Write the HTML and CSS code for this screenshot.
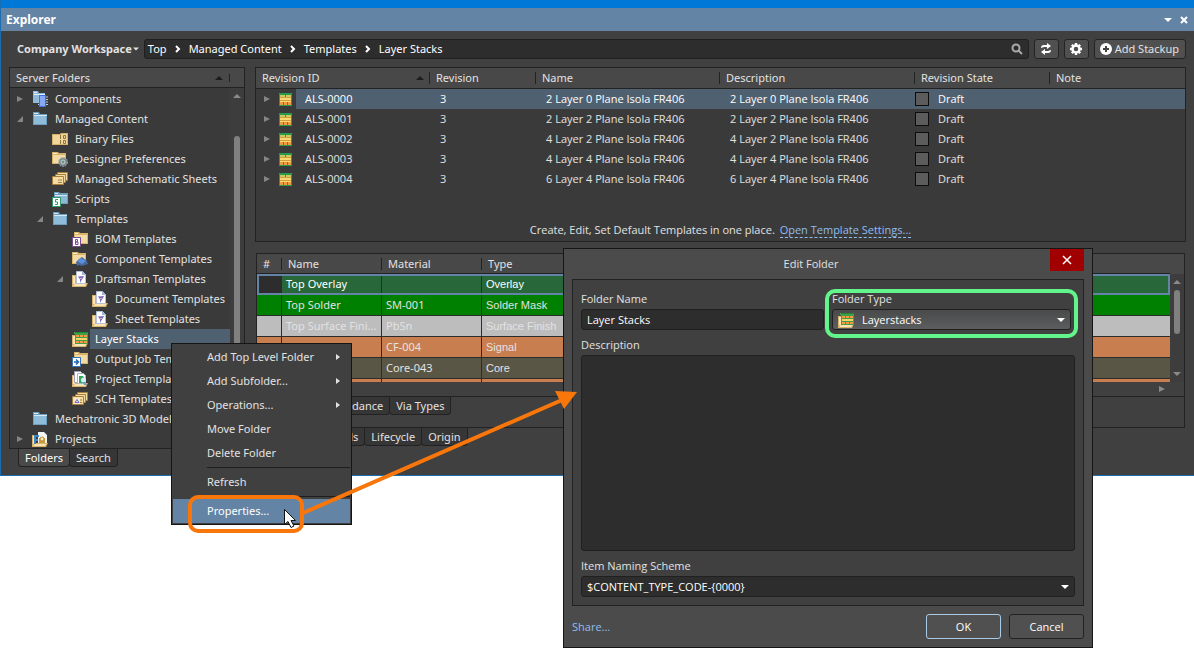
FILE: index.html
```html
<!DOCTYPE html>
<html lang="en">
<head>
    <meta charset="UTF-8">
    <meta name="viewport" content="width=device-width, initial-scale=1.0">
    <title>Explorer</title>
    <link rel="stylesheet" href="styles.css">
</head>
<body>
    <!-- Shared icons -->
    <svg class="sprite" aria-hidden="true">
        <symbol id="i-right" viewBox="0 0 8 8"><path d="M1 1l6 3-6 3z" fill="currentColor"/></symbol>
        <symbol id="i-sub" viewBox="0 0 8 8"><path d="M3 1l4 3-4 3z" fill="currentColor"/></symbol>
        <symbol id="i-open" viewBox="0 0 8 8"><path d="M7 1v6H1z" fill="currentColor"/></symbol>
        <symbol id="i-up" viewBox="0 0 8 8"><path d="M0 6l4-4 4 4z" fill="currentColor"/></symbol>
        <symbol id="i-down" viewBox="0 0 8 8"><path d="M0 2h8l-4 4z" fill="currentColor"/></symbol>
        <symbol id="i-chevron" viewBox="0 0 8 8"><path d="M2 1l3 3-3 3" fill="none" stroke="currentColor" stroke-width="2"/></symbol>
        <symbol id="i-blue" viewBox="0 0 16 16">
            <path d="M1 1h6l1 2h7v11H1z" fill="#6f9fbe"/>
            <path d="M2 2h4v1H2zM2 4h13v1H2z" fill="#d6e8f2"/>
            <path d="M2 5h12v8H2z" fill="#8fbcd8"/>
        </symbol>
        <symbol id="i-yellow" viewBox="0 0 16 16">
            <path d="M0 3h8l1-1h7v12H0z" fill="#d9b26a"/>
            <path d="M1 4h8l1-1h5v10H1z" fill="#f0d59c"/>
        </symbol>
        <symbol id="i-small" viewBox="0 0 16 16">
            <path d="M0 1h6l1 1h7v11H0z" fill="#d9b26a"/>
            <path d="M1 2h4v1H1z" fill="#fff3d4"/>
            <path d="M1 4h12v8H1z" fill="#f3dba6"/>
        </symbol>
        <symbol id="i-tray" viewBox="0 0 16 16">
            <path d="M0 4h4v8h12l-2 4H0z" fill="#d9b26a"/>
            <path d="M1 5h2v8H1zM3 13h11l-1 2H1z" fill="#f8e4b6"/>
        </symbol>
        <symbol id="i-components" viewBox="0 0 16 16">
            <path d="M1 0h5l1 2h6v10H1z" fill="#8cb9d8"/>
            <path d="M2 1h3v1H2zM2 3h11v1H2z" fill="#e2f0f8"/>
            <path d="M6 6h10M6 8.500h10M6 11h10M6 13.500h10" stroke="#b8cde8"/>
            <path d="M7 4h7v12H7z" fill="#3f6fdc"/>
            <path d="M8 5h5v10H8z" fill="#86a9f5"/>
        </symbol>
        <symbol id="i-binary" viewBox="0 0 16 16">
            <use href="#i-yellow"/>
            <path d="M8.500 4v4M11.500 4.500h2v3h-2zM8.500 9v4M11.500 9.500h2v3h-2z" fill="none" stroke="#8f7338"/>
        </symbol>
        <symbol id="i-prefs" viewBox="0 0 16 16">
            <use href="#i-small"/>
            <circle cx="11" cy="11" r="4" fill="#7d8a90"/>
            <circle cx="11" cy="11" r="4.500" fill="none" stroke="#9aa8b0" stroke-dasharray="2 1"/>
            <circle cx="11" cy="11" r="2" fill="#6f8f7c" stroke="#c4d0d0"/>
        </symbol>
        <symbol id="i-sheets" viewBox="0 0 16 16">
            <g fill="#f3dba6" stroke="#a97e3a">
                <path d="M5.500 1.500h10v8h-10z"/>
                <path d="M3.500 3.500h10v8h-10z"/>
                <path d="M.500 5.500h11v8H.500z"/>
            </g>
            <path d="M6 9h4M6 11.500h4" stroke="#a97e3a"/>
        </symbol>
        <symbol id="i-scripts" viewBox="0 0 16 16">
            <path d="M2 1h5l1 1h8v11H2z" fill="#6f9fbe"/>
            <path d="M3 2h3v1H3zM3 4h12v1H3z" fill="#d6e8f2"/>
            <path d="M3 5h12v7H3z" fill="#8cb9d8"/>
            <path d="M.500 6.500h8v9h-8z" fill="#fff" stroke="#2f9a68"/>
            <path d="M6 8.500H3.500V11h2v2.500H3" fill="none" stroke="#2f9a68"/>
        </symbol>
        <symbol id="i-bom" viewBox="0 0 16 16">
            <path d="M2 1h5l1 1h8v11H2z" fill="#d9b26a"/>
            <path d="M3 2h3v1H3z" fill="#fff3d4"/>
            <path d="M3 4h12v8H3z" fill="#f3dba6"/>
            <path d="M.500 6.500h8v9h-8z" fill="#fff" stroke="#7c4a94"/>
            <path d="M3.500 8.500H5.500v2.500h-2zM3.500 11h2.500v2.500h-2.500z" fill="none" stroke="#7c4a94"/>
        </symbol>
        <symbol id="i-comptpl" viewBox="0 0 16 16">
            <use href="#i-small"/>
            <path d="M4 11l3-3 3-2 5 4 1 3-3 1-3 1-3-1-2 1z" fill="#49689a"/>
            <path d="M5 10l4-3 5 3-4 3z" fill="#5b8fe0"/>
        </symbol>
        <symbol id="i-draft" viewBox="0 0 16 16">
            <use href="#i-tray"/>
            <path d="M4.500.500h6l3 3v9h-9z" fill="#fff" stroke="#b6c0d8"/>
            <path d="M6 5.500l6-.5-1 2-2 3-1 2V8.500z" fill="#7a6cc0"/>
            <path d="M8 7.500h2" stroke="#e7a6b0"/>
            <path d="M10 0l4 4h-4z" fill="#9db4d8"/>
        </symbol>
        <symbol id="i-stack" viewBox="0 0 16 16">
            <use href="#i-tray"/>
            <path d="M2 1h14v12H3V3H2z" fill="#3fa04a"/>
            <path d="M4 4h3v2H4zM8 4h3v2H8zM12 4h3v2h-3zM4 10h3v2H4zM8 10h3v2H8zM12 10h3v2h-3z" fill="#f29a44"/>
            <path d="M4 7h11v2H4z" fill="#f6d46c"/>
            <path d="M3 1.500h13" stroke="#208a38"/>
        </symbol>
        <symbol id="i-output" viewBox="0 0 16 16">
            <path d="M2 1h5l1 1h8v11H2z" fill="#d9b26a"/>
            <path d="M3 2h3v1H3z" fill="#fff3d4"/>
            <path d="M3 4h12v8H3z" fill="#f3dba6"/>
            <path d="M.500 6.500h8v9h-8z" fill="#fff" stroke="#3a72b8"/>
            <path d="M2 11h4M4 8.500L6.500 11 4 13.500" fill="none" stroke="#2363b0" stroke-width="1.500"/>
        </symbol>
        <symbol id="i-project" viewBox="0 0 16 16">
            <use href="#i-tray"/>
            <path d="M2.500.500h6l2 2v9h-8z" fill="#fff" stroke="#a5a0c8"/>
            <path d="M5.500 2.500h6l2 2v8h-8z" fill="#fff" stroke="#a5b8c8"/>
            <path d="M7 5h4l2 3v4H7z" fill="#35a75d"/>
            <circle cx="11.500" cy="9" r="2.500" fill="#d8ecf8"/>
            <path d="M11 11l2 0 2 3h-3z" fill="#5f9fc8"/>
        </symbol>
        <symbol id="i-sch" viewBox="0 0 16 16">
            <use href="#i-sheets"/>
            <path d="M2 7h6v6H2z" fill="#f8ead0"/>
            <path d="M3 11.500l2-3 2 3z" fill="none" stroke="#6a6cc0"/>
        </symbol>
        <symbol id="i-projects" viewBox="0 0 16 16">
            <use href="#i-tray"/>
            <path d="M6 1h6l3 3v8H6z" fill="#f4f4f4"/>
            <path d="M3 13V5h4M3 9h3" fill="none" stroke="#3f84c8" stroke-width="2"/>
            <path d="M7 7h6v5H7z" fill="#c99a3e"/>
            <circle cx="10" cy="8" r="2" fill="#fff0c0" stroke="#b98c34"/>
        </symbol>
        <symbol id="i-board" viewBox="0 0 13 13">
            <path d="M0 0h13v13H0z" fill="#279a4b"/>
            <path d="M1 2h5v2H1zM7 2h5v2H7z" fill="#c8cc60"/>
            <path d="M1 4h11v5H1z" fill="#f6dc6c"/>
            <path d="M1 4.500h11M1 7.500h11" stroke="#d89a48"/>
            <path d="M1 9h3v3H1zM5 9h3v3H5zM9 9h3v3H9z" fill="#f09a44"/>
        </symbol>
    </svg>

    <main class="explorer">
        <header class="titlebar">
            <h1>Explorer</h1>
            <button class="title-btn" aria-label="Panel menu"><svg class="tiny"><use href="#i-down"/></svg></button>
            <button class="title-btn" aria-label="Close panel"><svg class="tiny" viewBox="0 0 8 8"><path d="M1 1l6 6M7 1L1 7" stroke="currentColor" stroke-width="2"/></svg></button>
        </header>

        <div class="toolbar">
            <button class="workspace">Company Workspace <svg class="caret"><use href="#i-down"/></svg></button>
            <nav class="path" aria-label="Path">
                <a href="#">Top</a><svg class="tiny"><use href="#i-chevron"/></svg>
                <a href="#">Managed Content</a><svg class="tiny"><use href="#i-chevron"/></svg>
                <a href="#">Templates</a><svg class="tiny"><use href="#i-chevron"/></svg>
                <a href="#">Layer Stacks</a>
                <svg class="search" viewBox="0 0 12 12"><circle cx="5" cy="5" r="3.500" fill="none" stroke="#aaa" stroke-width="2"/><path d="M7.500 7.500L11 11" stroke="#aaa" stroke-width="2"/></svg>
            </nav>
            <button class="tool" aria-label="Refresh">
                <svg class="tool-icon" viewBox="0 0 12 12"><path d="M1 5c0-2 1-3 3-3h3V0l4 3-4 3V4H4C3 4 2.500 5 1 5zM11 7c0 2-1 3-3 3H5v2L1 9l4-3v2h3c1 0 1.500-1 3-1z" fill="#fff"/></svg>
            </button>
            <button class="tool" aria-label="Settings">
                <svg class="tool-icon" viewBox="0 0 12 12"><circle cx="6" cy="6" r="3.500" fill="none" stroke="#fff" stroke-width="2.500"/><path d="M6 0v2M6 10v2M0 6h2M10 6h2M1.800 1.800l1.400 1.400M8.800 8.800l1.400 1.400M10.200 1.800L8.800 3.200M3.200 8.800l-1.400 1.400" stroke="#fff" stroke-width="2.400"/></svg>
            </button>
            <button class="tool">
                <svg class="tool-icon" viewBox="0 0 12 12"><circle cx="6" cy="6" r="6" fill="#fff"/><path d="M6 3v6M3 6h6" stroke="#444" stroke-width="2"/></svg>
                Add Stackup
            </button>
        </div>

        <div class="columns">
            <aside class="sidebar">
                <div class="panel">
                    <div class="panel-head">
                        <h2>Server Folders</h2>
                        <svg class="sort"><use href="#i-up"/></svg>
                    </div>
                    <div class="scroller">
                        <ul class="tree">
                            <li><div class="node"><svg class="twist"><use href="#i-right"/></svg><svg class="icon"><use href="#i-components"/></svg><span>Components</span></div></li>
                            <li><div class="node"><svg class="twist"><use href="#i-open"/></svg><svg class="icon"><use href="#i-blue"/></svg><span>Managed Content</span></div>
                                <ul>
                                    <li><div class="node"><i class="twist"></i><svg class="icon"><use href="#i-binary"/></svg><span>Binary Files</span></div></li>
                                    <li><div class="node"><i class="twist"></i><svg class="icon"><use href="#i-prefs"/></svg><span>Designer Preferences</span></div></li>
                                    <li><div class="node"><i class="twist"></i><svg class="icon"><use href="#i-sheets"/></svg><span>Managed Schematic Sheets</span></div></li>
                                    <li><div class="node"><i class="twist"></i><svg class="icon"><use href="#i-scripts"/></svg><span>Scripts</span></div></li>
                                    <li><div class="node"><svg class="twist"><use href="#i-open"/></svg><svg class="icon"><use href="#i-blue"/></svg><span>Templates</span></div>
                                        <ul>
                                            <li><div class="node"><i class="twist"></i><svg class="icon"><use href="#i-bom"/></svg><span>BOM Templates</span></div></li>
                                            <li><div class="node"><i class="twist"></i><svg class="icon"><use href="#i-comptpl"/></svg><span>Component Templates</span></div></li>
                                            <li><div class="node"><svg class="twist"><use href="#i-open"/></svg><svg class="icon"><use href="#i-draft"/></svg><span>Draftsman Templates</span></div>
                                                <ul>
                                                    <li><div class="node"><i class="twist"></i><svg class="icon"><use href="#i-draft"/></svg><span>Document Templates</span></div></li>
                                                    <li><div class="node"><i class="twist"></i><svg class="icon"><use href="#i-draft"/></svg><span>Sheet Templates</span></div></li>
                                                </ul>
                                            </li>
                                            <li><div class="node selected"><i class="twist"></i><svg class="icon"><use href="#i-stack"/></svg><span>Layer Stacks</span></div></li>
                                            <li><div class="node"><i class="twist"></i><svg class="icon"><use href="#i-output"/></svg><span>Output Job Templates</span></div></li>
                                            <li><div class="node"><i class="twist"></i><svg class="icon"><use href="#i-project"/></svg><span>Project Templates</span></div></li>
                                            <li><div class="node"><i class="twist"></i><svg class="icon"><use href="#i-sch"/></svg><span>SCH Templates</span></div></li>
                                        </ul>
                                    </li>
                                </ul>
                            </li>
                            <li><div class="node"><i class="twist"></i><svg class="icon"><use href="#i-blue"/></svg><span>Mechatronic 3D Models</span></div></li>
                            <li><div class="node"><svg class="twist"><use href="#i-right"/></svg><svg class="icon"><use href="#i-projects"/></svg><span>Projects</span></div></li>
                        </ul>
                        <div class="scrollbar tall"><svg class="tiny"><use href="#i-up"/></svg><div class="thumb"></div></div>
                    </div>
                </div>
                <div class="tabs side-tabs">
                    <button class="tab active">Folders</button>
                    <button class="tab">Search</button>
                </div>
            </aside>

            <section class="content">
                <div class="panel revisions">
                    <table class="grid">
                        <thead>
                            <tr><th class="c-id"><div class="sorted">Revision ID <svg class="sort"><use href="#i-up"/></svg></div></th><th class="c-rev">Revision</th><th class="c-name">Name</th><th class="c-desc">Description</th><th class="c-state">Revision State</th><th>Note</th></tr>
                        </thead>
                        <tbody>
                            <tr class="selected"><td class="id"><div class="node"><svg class="twist"><use href="#i-right"/></svg><svg class="board"><use href="#i-board"/></svg><span>ALS-0000</span></div></td><td>3</td><td>2 Layer 0 Plane Isola FR406</td><td>2 Layer 0 Plane Isola FR406</td><td class="state"><label><input type="checkbox">Draft</label></td><td></td></tr>
                            <tr><td class="id"><div class="node"><svg class="twist"><use href="#i-right"/></svg><svg class="board"><use href="#i-board"/></svg><span>ALS-0001</span></div></td><td>3</td><td>2 Layer 2 Plane Isola FR406</td><td>2 Layer 2 Plane Isola FR406</td><td class="state"><label><input type="checkbox">Draft</label></td><td></td></tr>
                            <tr><td class="id"><div class="node"><svg class="twist"><use href="#i-right"/></svg><svg class="board"><use href="#i-board"/></svg><span>ALS-0002</span></div></td><td>3</td><td>4 Layer 2 Plane Isola FR406</td><td>4 Layer 2 Plane Isola FR406</td><td class="state"><label><input type="checkbox">Draft</label></td><td></td></tr>
                            <tr><td class="id"><div class="node"><svg class="twist"><use href="#i-right"/></svg><svg class="board"><use href="#i-board"/></svg><span>ALS-0003</span></div></td><td>3</td><td>4 Layer 4 Plane Isola FR406</td><td>4 Layer 4 Plane Isola FR406</td><td class="state"><label><input type="checkbox">Draft</label></td><td></td></tr>
                            <tr><td class="id"><div class="node"><svg class="twist"><use href="#i-right"/></svg><svg class="board"><use href="#i-board"/></svg><span>ALS-0004</span></div></td><td>3</td><td>6 Layer 4 Plane Isola FR406</td><td>6 Layer 4 Plane Isola FR406</td><td class="state"><label><input type="checkbox">Draft</label></td><td></td></tr>
                        </tbody>
                    </table>
                    <p class="hint">Create, Edit, Set Default Templates in one place. <a href="#">Open Template Settings...</a></p>
                </div>

                <div class="panel preview">
                    <div class="layers-area">
                        <div class="layers-clip">
                            <table class="layers">
                                <thead>
                                    <tr><th class="c-num">#</th><th class="c-layer">Name</th><th class="c-layer">Material</th><th>Type</th></tr>
                                </thead>
                                <tbody>
                                    <tr class="overlay"><td class="num"></td><td>Top Overlay</td><td></td><td class="type">Overlay</td></tr>
                                    <tr class="solder"><td></td><td>Top Solder</td><td>SM-001</td><td class="type">Solder Mask</td></tr>
                                    <tr class="finish"><td></td><td>Top Surface Fini...</td><td>PbSn</td><td class="type">Surface Finish</td></tr>
                                    <tr class="signal"><td></td><td></td><td>CF-004</td><td class="type">Signal</td></tr>
                                    <tr class="core"><td></td><td></td><td>Core-043</td><td class="type">Core</td></tr>
                                    <tr class="signal"><td></td><td></td><td></td><td></td></tr>
                                </tbody>
                            </table>
                        </div>
                        <div class="scrollbar"><svg class="tiny"><use href="#i-up"/></svg><div class="thumb"></div><svg class="tiny"><use href="#i-down"/></svg></div>
                    </div>
                    <div class="hscroll"><svg class="tiny"><use href="#i-right"/></svg></div>
                    <div class="tabs view-tabs">
                        <button class="tab">Impedance</button>
                        <button class="tab">Via Types</button>
                    </div>
                </div>
                <div class="tabs item-tabs">
                    <button class="tab">Details</button>
                    <button class="tab">Lifecycle</button>
                    <button class="tab">Origin</button>
                </div>
            </section>
        </div>
    </main>

    <div class="menu" role="menu">
        <button role="menuitem">Add Top Level Folder <svg class="tiny"><use href="#i-sub"/></svg></button>
        <button role="menuitem">Add Subfolder... <svg class="tiny"><use href="#i-sub"/></svg></button>
        <button role="menuitem">Operations... <svg class="tiny"><use href="#i-sub"/></svg></button>
        <button role="menuitem">Move Folder</button>
        <button role="menuitem">Delete Folder</button>
        <hr>
        <button role="menuitem">Refresh</button>
        <hr>
        <button role="menuitem" class="active">Properties...</button>
    </div>

    <form class="dialog" role="dialog" aria-labelledby="dialog-title">
        <header class="dialog-head">
            <h2 id="dialog-title">Edit Folder</h2>
            <button type="button" class="close" aria-label="Close"><svg viewBox="0 0 10 10"><path d="M1 1l8 8M9 1L1 9" stroke="#fff" stroke-width="1.500"/></svg></button>
        </header>
        <div class="fields">
            <div class="field-row">
                <div class="field name-field">
                    <label for="folder-name">Folder Name</label>
                    <input type="text" id="folder-name" value="Layer Stacks">
                </div>
                <div class="field type-field">
                    <label for="folder-type">Folder Type</label>
                    <div class="select raised">
                        <svg class="icon"><use href="#i-stack"/></svg>
                        <select id="folder-type"><option>Layerstacks</option></select>
                        <svg class="arrow"><use href="#i-down"/></svg>
                    </div>
                </div>
            </div>
            <div class="field">
                <label for="description">Description</label>
                <textarea id="description"></textarea>
            </div>
            <div class="field">
                <label for="naming">Item Naming Scheme</label>
                <div class="select">
                    <select id="naming"><option>$CONTENT_TYPE_CODE-{0000}</option></select>
                    <svg class="arrow"><use href="#i-down"/></svg>
                </div>
            </div>
        </div>
        <footer class="dialog-foot">
            <a href="#">Share...</a>
            <button type="button" class="btn primary">OK</button>
            <button type="button" class="btn">Cancel</button>
        </footer>
    </form>

    <!-- Callouts -->
    <svg class="callouts" viewBox="0 0 1194 648" aria-hidden="true">
        <rect x="190" y="497" width="112" height="34" rx="8" fill="none" stroke="#f9760b" stroke-width="4"/>
        <path d="M303 513L562 400" stroke="#f9760b" stroke-width="4"/>
        <path d="M577 392l-22-1 9 18z" fill="#f9760b"/>
        <rect x="827" y="291" width="249" height="45" rx="8" fill="none" stroke="#62f58b" stroke-width="4"/>
        <path d="M284.500 509.500v15l3.500-3 3 6 3-1.500-3-5.500h4.500z" fill="#fff" stroke="#111"/>
    </svg>
</body>
</html>
```

FILE: styles.css
```css
* {
    box-sizing: border-box;
}

body {
    margin: 0;
    position: relative;
    min-height: 100vh;
    background-color: #fff;
    color: #e2e2e2;
    font-family: "Noto Sans", sans-serif;
    font-size: 11px;
    line-height: 20px;
}

h1, h2, p, ul {
    margin: 0;
    padding: 0;
    font-size: 11px;
    font-weight: normal;
}

ul {
    list-style: none;
}

button, input, select, textarea {
    margin: 0;
    font: inherit;
    color: inherit;
}

button {
    padding: 0;
    border: none;
    background: none;
}

a {
    color: inherit;
    text-decoration: none;
}

svg {
    display: block;
    flex: none;
}

.sprite {
    position: absolute;
    width: 0;
    height: 0;
}

.tiny {
    width: 8px;
    height: 8px;
}

.icon {
    width: 16px;
    height: 16px;
}

/* Explorer window */
.explorer {
    background-color: #404040;
    border: solid #1b6db0;
    border-width: 0 0 1px 1px;
}

.titlebar {
    display: flex;
    align-items: center;
    gap: 8px;
    height: 31px;
    padding: 0 6px 0 5px;
    border-top: 8px solid #0078d7;
    background-color: #6484a5;
    color: #fff;
}

.titlebar h1 {
    flex: 1;
    font-size: 12px;
    font-weight: bold;
}

.toolbar {
    display: flex;
    align-items: center;
    gap: 5px;
    height: 36px;
    padding: 0 8px 0 16px;
}

.workspace {
    display: flex;
    align-items: center;
    gap: 1px;
    font-weight: bold;
}

.caret {
    width: 6px;
    height: 6px;
}

.path {
    flex: 1;
    display: flex;
    align-items: center;
    gap: 7px;
    height: 20px;
    padding: 0 5px 0 3px;
    background-color: #2d2d2d;
    border: 1px solid #202020;
    border-radius: 3px;
    color: #fff;
}

.search {
    width: 12px;
    height: 12px;
    margin-left: auto;
}

.tool {
    display: flex;
    align-items: center;
    gap: 3px;
    height: 20px;
    padding: 0 6px 0 5px;
    background-color: #505050;
    border: 1px solid #242424;
    border-radius: 3px;
    white-space: nowrap;
}

.tool-icon {
    width: 12px;
    height: 12px;
}

.columns {
    display: flex;
    gap: 10px;
    padding: 0 8px 8px;
}

.sidebar {
    flex: none;
    width: 236px;
}

.content {
    flex: 1;
    min-width: 0;
}

.panel {
    border: 1px solid #222;
    background-color: #3a3a3a;
}

.panel-head {
    display: flex;
    align-items: center;
    height: 20px;
    padding: 0 14px 0 6px;
    background-color: #484848;
    border-bottom: 1px solid #222;
}

.panel-head h2 {
    flex: 1;
}

.panel-head .sort {
    width: 8px;
    padding-right: 6px;
    border-right: 1px solid #222;
    box-sizing: content-box;
}

.sort {
    width: 8px;
    height: 8px;
    color: #1c1c1c;
}

/* Folder tree */
.scroller {
    display: flex;
}

.tree {
    flex: 1;
    min-width: 0;
    margin-bottom: -1px;
    padding-top: 1px;
}

.tree ul {
    padding-left: 20px;
}

.node {
    display: flex;
    align-items: center;
    height: 20px;
    white-space: nowrap;
}

.node span {
    flex: 1;
    min-width: 0;
    margin-left: 2px;
    padding-left: 5px;
}

.node.selected span {
    background-color: #4f6070;
    color: #fff;
}

.twist {
    width: 8px;
    height: 8px;
    margin: 0 8px 0 6px;
    color: #858585;
}

.scrollbar {
    flex: none;
    display: flex;
    flex-direction: column;
    align-items: center;
    width: 14px;
    padding: 4px 0;
    background-color: #3d3d3d;
    color: #8a8a8a;
}

.thumb {
    width: 6px;
    height: 44px;
    border-radius: 3px;
    background-color: #808080;
}

.scrollbar .thumb {
    margin: 4px 0 auto;
}

.tall .thumb {
    height: 300px;
    margin: 36px 0 auto;
}

/* Tabs */
.tabs {
    display: flex;
}

.tab {
    height: 18px;
    padding: 0 6px;
    line-height: 16px;
    background-color: #363636;
    border: solid #222;
    border-width: 0 1px 1px;
    border-radius: 0 0 4px 4px;
}

.tab + .tab {
    margin-left: -1px;
}

.tab.active {
    background-color: #4a4a4a;
    color: #fff;
}

.side-tabs {
    padding-left: 9px;
}

.view-tabs {
    height: 31px;
    padding-left: 61px;
    border-top: 1px solid #222;
}

.item-tabs {
    padding-left: 61px;
}

/* Revisions */
.revisions {
    display: flex;
    flex-direction: column;
    height: 175px;
    font-family: "Open Sans", sans-serif;
}

table {
    width: 100%;
    border-collapse: separate;
    border-spacing: 0;
    table-layout: fixed;
}

th {
    height: 21px;
    padding: 0 0 0 6px;
    text-align: left;
    font-weight: normal;
    font-family: "Noto Sans", sans-serif;
    line-height: 20px;
    background: linear-gradient(#222, #222) right center / 1px 12px no-repeat #484848;
    border-bottom: 1px solid #222;
}

th:last-child {
    background: #484848;
}

td {
    height: 20px;
    padding: 0 0 0 10px;
    line-height: 18px;
    white-space: nowrap;
}

.c-id {
    width: 174px;
}

.c-rev {
    width: 106px;
}

.c-name {
    width: 184px;
}

.c-desc {
    width: 195px;
}

.c-state {
    width: 135px;
}

.sorted {
    display: flex;
    align-items: center;
    justify-content: space-between;
    padding-right: 6px;
}

.id {
    padding: 0;
}

.board {
    width: 13px;
    height: 13px;
}

.id .twist {
    margin-left: 7px;
}

.id .node span {
    margin-left: 4px;
    padding-left: 9px;
}

.grid .selected td {
    background-color: #4f6070;
    color: #fff;
}

.grid .selected .id {
    background: linear-gradient(#4f6070, #4f6070) 40px 0 no-repeat;
}

.state {
    padding-left: 0;
}

.state label {
    display: flex;
    align-items: center;
    gap: 9px;
}

.state input {
    appearance: none;
    width: 14px;
    height: 14px;
    border: 1px solid #0c0c0c;
    background-color: #5c5c5c;
}

.hint {
    margin-top: auto;
    padding-bottom: 1px;
    text-align: center;
}

.hint a {
    margin-left: 2px;
    color: #8fbdf0;
    border-bottom: 1px dashed #8fbdf0;
}

/* Layer stack preview */
.preview {
    margin-top: 11px;
    margin-left: 1px;
    margin-right: 1px;
    background-color: #404040;
}

.layers-area {
    display: flex;
    background: linear-gradient(#484848, #484848) top / 100% 20px no-repeat;
}

.layers-clip {
    flex: 1;
    min-width: 0;
    height: 128px;
    overflow: hidden;
}

.layers-area .scrollbar {
    margin-top: 20px;
}

.layers th {
    height: 20px;
    line-height: 18px;
}

.layers td {
    height: 21px;
    padding-left: 4px;
    border-right: 1px solid #2c2c2c;
    border-bottom: 1px solid #2c2c2c;
}

.layers td:last-child {
    border-right: none;
}

.layers td.type {
    font-family: "Liberation Sans", sans-serif;
}

.c-num {
    width: 25px;
}

.c-layer {
    width: 100px;
}

.overlay {
    background-color: #276739;
    outline: 2px solid #6484a5;
    outline-offset: -2px;
    color: #fff;
}

.overlay .num {
    background-color: #2d2d2d;
}

.solder {
    background-color: #008000;
}

.finish {
    background-color: #bdbdbd;
}

.signal {
    background-color: #c97e50;
}

.core {
    background-color: #5a5646;
}

.hscroll {
    display: flex;
    align-items: center;
    justify-content: flex-end;
    height: 14px;
    padding-right: 18px;
    color: #8a8a8a;
}

/* Context menu */
.menu {
    position: absolute;
    left: 171px;
    top: 343px;
    width: 181px;
    padding: 1px;
    background-color: #404040;
    border: 1px solid #151515;
}

.menu button {
    display: flex;
    align-items: center;
    justify-content: space-between;
    width: 100%;
    height: 24px;
    padding: 0 9px 0 34px;
}

.menu hr {
    height: 1px;
    margin: 2px 0 2px 34px;
    border: none;
    background-color: #1e1e1e;
}

.menu .active {
    background-color: #6484a5;
    color: #fff;
}

/* Edit Folder dialog */
.dialog {
    position: absolute;
    left: 563px;
    top: 248px;
    width: 530px;
    padding: 0 8px;
    background-color: #4b4b4b;
    border: 1px solid #161616;
    font-family: "Open Sans", sans-serif;
}

.dialog-head {
    display: flex;
    align-items: flex-start;
    height: 30px;
}

.dialog-head h2 {
    flex: 1;
    padding-top: 5px;
    text-align: center;
}

.close {
    display: flex;
    align-items: center;
    justify-content: center;
    width: 34px;
    height: 22px;
    background-color: #a00000;
}

.close svg {
    width: 10px;
    height: 10px;
}

.fields {
    padding: 9px 8px 8px;
    background-color: #404040;
    border: 1px solid #222;
}

.field-row {
    display: flex;
    gap: 8px;
}

.name-field {
    flex: 1;
}

.type-field {
    width: 243px;
    padding-right: 4px;
}

.field label {
    display: block;
}

.field input,
.field select,
.field textarea {
    display: block;
    width: 100%;
    height: 21px;
    padding: 0 5px;
    background-color: #2d2d2d;
    border: 1px solid #202020;
    border-radius: 3px;
    color: #fff;
}

.field textarea {
    height: 196px;
    resize: none;
}

.field + .field,
.field-row + .field {
    margin-top: 5px;
}

.field-row .field {
    margin-top: 0;
}

.select {
    display: grid;
    align-items: center;
}

.select > * {
    grid-area: 1 / 1;
}

.field select {
    appearance: none;
}

.field .raised select {
    padding-left: 29px;
    background: linear-gradient(#4a4a4a, #5b5d5f);
}

.select svg {
    z-index: 1;
    pointer-events: none;
}

.select .icon {
    margin-left: 6px;
}

.arrow {
    width: 8px;
    height: 8px;
    margin-right: 6px;
    justify-self: end;
    color: #fff;
}

.dialog-foot {
    display: flex;
    align-items: center;
    gap: 8px;
    height: 41px;
}

.dialog-foot a {
    margin-right: auto;
    color: #8fbdf0;
}

.btn {
    width: 75px;
    height: 25px;
    background-color: #505050;
    border: 1px solid #222;
    border-radius: 3px;
    color: #fff;
}

.btn.primary {
    border-color: #a9cbe6;
}

.callouts {
    position: absolute;
    left: 0;
    top: 0;
    width: 1194px;
    height: 648px;
    pointer-events: none;
}
```
